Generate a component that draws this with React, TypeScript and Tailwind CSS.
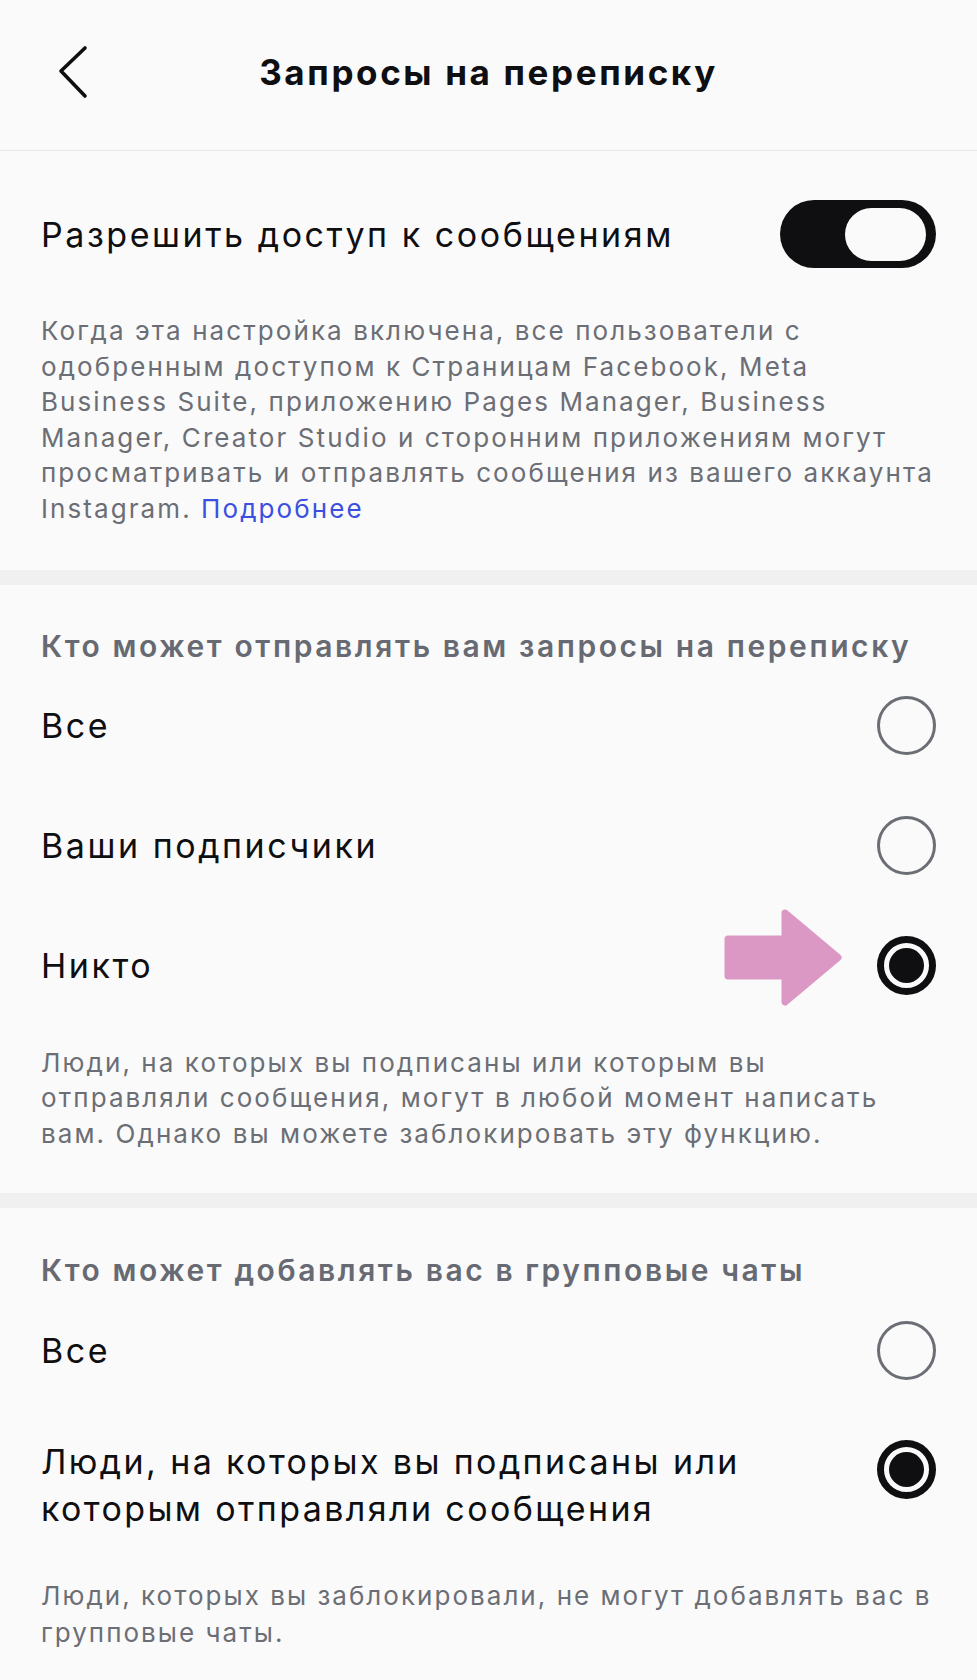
import React from "react";

// Settings screen: message requests
export default function App() {
  return (
    <div className="min-h-[1680px] w-full bg-[#fafafa] font-[Inter,'Noto_Sans',sans-serif] text-[#0f0f12]">
      {/* Header */}
      <header className="relative flex h-[151px] items-center justify-center border-b border-[#e8e8e8]">
        <button className="absolute left-[56px] top-[45px] p-0">
          <svg width="34" height="54" viewBox="0 0 34 54" fill="none">
            <path
              d="M29 3 L5 26 L29 51"
              stroke="#0f0f12"
              strokeWidth="3.6"
              strokeLinecap="round"
              strokeLinejoin="round"
            />
          </svg>
        </button>
        <h1 className="mb-[6px] text-[35px] font-bold tracking-[0.075em]">Запросы на переписку</h1>
      </header>

      {/* Message access */}
      <section className="px-[41px] pb-[43px] pt-[49px]">
        <div className="flex h-[68px] items-center justify-between">
          <span className="text-[34px] tracking-[0.075em]">Разрешить доступ к сообщениям</span>
          <Toggle />
        </div>
        <p className="mt-[45px] whitespace-nowrap text-[26px] leading-[35.6px] tracking-[0.08em] text-[#6b6e75]">
          Когда эта настройка включена, все пользователи с<br />
          одобренным доступом к Страницам Facebook, Meta<br />
          Business Suite, приложению Pages Manager, Business<br />
          Manager, Creator Studio и сторонним приложениям могут<br />
          просматривать и отправлять сообщения из вашего аккаунта<br />
          Instagram. <span className="text-[#3b50e0]">Подробнее</span>
        </p>
      </section>

      <div className="h-[15px] bg-[#f0f0f0]" />

      {/* Message requests */}
      <section className="px-[41px] pb-[42px] pt-[41px]">
        <h2 className="h-[40px] text-[30px] font-semibold leading-[40px] tracking-[0.086em] text-[#676a73]">
          Кто может отправлять вам запросы на переписку
        </h2>
        <RadioRow label="Все" />
        <RadioRow label="Ваши подписчики" />
        <div className="relative">
          <RadioRow label="Никто" selected />
          <svg
            className="absolute left-[683px] top-[2px]"
            width="118"
            height="99"
            viewBox="0 0 118 99"
          >
            <path
              d="M4 31 H61 V5 L114 49.5 L61 94 V68 H4 Z"
              fill="#dc98c4"
              stroke="#dc98c4"
              strokeWidth="7"
              strokeLinejoin="round"
            />
          </svg>
        </div>
        <p className="mt-[19px] whitespace-nowrap text-[26px] leading-[35.6px] tracking-[0.08em] text-[#6b6e75]">
          Люди, на которых вы подписаны или которым вы<br />
          отправляли сообщения, могут в любой момент написать<br />
          вам. Однако вы можете заблокировать эту функцию.
        </p>
      </section>

      <div className="h-[15px] bg-[#f0f0f0]" />

      {/* Group chats */}
      <section className="px-[41px] pb-[40px] pt-[42px]">
        <h2 className="h-[40px] text-[30px] font-semibold leading-[40px] tracking-[0.086em] text-[#676a73]">
          Кто может добавлять вас в групповые чаты
        </h2>
        <RadioRow label="Все" />
        <div className="flex items-start justify-between pt-[28px]">
          <span className="text-[34px] leading-[47px] tracking-[0.07em]">
            Люди, на которых вы подписаны или
            <br />
            которым отправляли сообщения
          </span>
          <div className="mt-[2px]">
            <Radio selected />
          </div>
        </div>
        <p className="mt-[46px] whitespace-nowrap text-[26px] leading-[36.4px] tracking-[0.078em] text-[#6b6e75]">
          Люди, которых вы заблокировали, не могут добавлять вас в<br />
          групповые чаты.
        </p>
      </section>
    </div>
  );
}

function Toggle() {
  return (
    <div className="flex h-[68px] w-[156px] items-center justify-end rounded-full bg-[#0f0f12] pr-[10px]">
      <div className="h-[53px] w-[81px] rounded-full bg-[#fafafa]" />
    </div>
  );
}

function RadioRow({ label, selected = false }: { label: string; selected?: boolean }) {
  return (
    <div className="flex h-[120px] items-center justify-between">
      <span className="text-[34px] tracking-[0.075em]">{label}</span>
      <Radio selected={selected} />
    </div>
  );
}

function Radio({ selected = false }: { selected?: boolean }) {
  if (selected) {
    return (
      <div className="flex h-[59px] w-[59px] items-center justify-center rounded-full border-[7px] border-[#0f0f12]">
        <div className="h-[35px] w-[35px] rounded-full bg-[#0f0f12]" />
      </div>
    );
  }
  return <div className="h-[59px] w-[59px] rounded-full border-[3px] border-[#6b6e75]" />;
}
